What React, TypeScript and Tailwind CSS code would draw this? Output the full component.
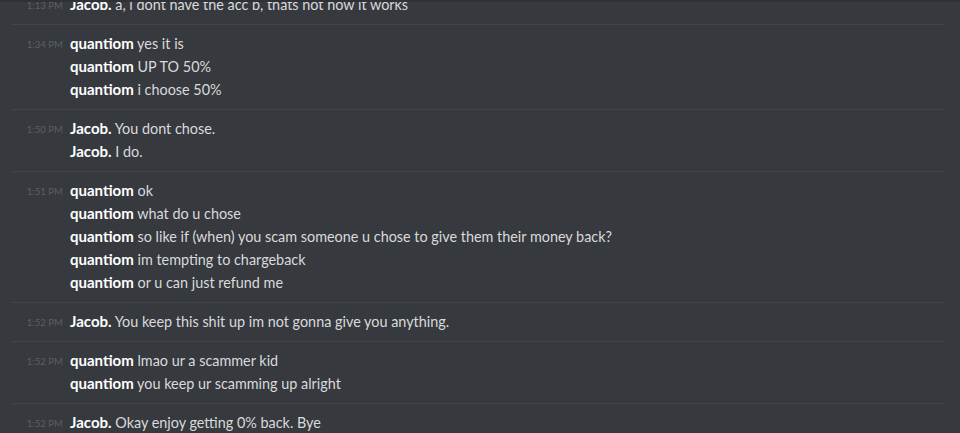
import React from "react";

type Group = { time: string; user: string; lines: string[] };

const groups: Group[] = [
  { time: "1:13 PM", user: "Jacob.", lines: ["a, i dont have the acc b, thats not how it works"] },
  { time: "1:34 PM", user: "quantiom", lines: ["yes it is", "UP TO 50%", "i choose 50%"] },
  { time: "1:50 PM", user: "Jacob.", lines: ["You dont chose.", "I do."] },
  {
    time: "1:51 PM",
    user: "quantiom",
    lines: [
      "ok",
      "what do u chose",
      "so like if (when) you scam someone u chose to give them their money back?",
      "im tempting to chargeback",
      "or u can just refund me",
    ],
  },
  { time: "1:52 PM", user: "Jacob.", lines: ["You keep this shit up im not gonna give you anything."] },
  { time: "1:52 PM", user: "quantiom", lines: ["lmao ur a scammer kid", "you keep ur scamming up alright"] },
  { time: "1:52 PM", user: "Jacob.", lines: ["Okay enjoy getting 0% back. Bye"] },
];

export default function App() {
  return (
    <div
      className="w-[960px] h-[433px] overflow-hidden bg-[#36393e] relative"
      style={{ fontFamily: "Lato, 'Open Sans', sans-serif" }}
    >
      <div className="absolute top-0 left-0 right-0 h-[2px] bg-[#2f3136] z-10" />
      <div className="flex flex-col mt-[-6px]">
        {groups.map((g, gi) => (
          <div key={gi} className="flex flex-col">
            {gi > 0 && <div className="h-px bg-[#41444a] ml-[12px] w-[932px]" />}
            <div className={gi === 0 ? "pb-[7px]" : "pt-[8px] pb-[7px]"}>
              {g.lines.map((l, li) => (
                <div key={li} className="flex items-center h-[23px]">
                  <div className="w-[64px] shrink-0 text-right pr-px text-[9.6px] text-[#5c5f66] leading-none">
                    {li === 0 ? g.time : ""}
                  </div>
                  <div className="pl-[6px] leading-[20px] mb-[2px] whitespace-nowrap">
                    <span className="font-bold text-white text-[15px]">{g.user}</span>
                    <span className="text-[#d9dadb] text-[14.4px]"> {l}</span>
                  </div>
                </div>
              ))}
            </div>
          </div>
        ))}
      </div>
    </div>
  );
}
